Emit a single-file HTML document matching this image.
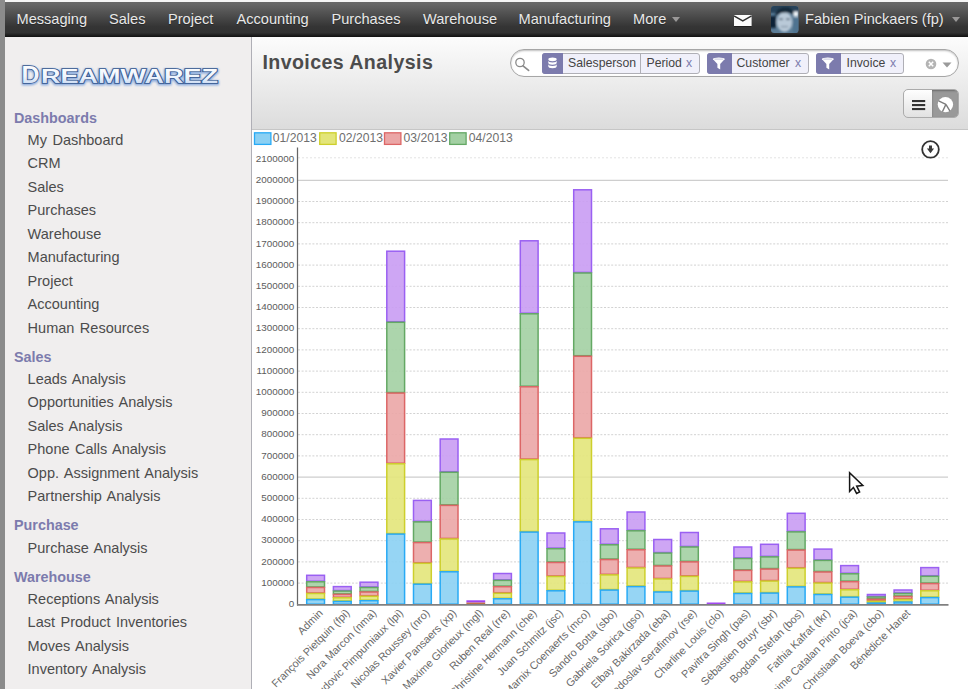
<!DOCTYPE html>
<html lang="en"><head><meta charset="utf-8"><title>Invoices Analysis - OpenERP</title>
<style>
html,body{margin:0;padding:0}
body{width:968px;height:689px;overflow:hidden;position:relative;background:#fff;font-family:"Liberation Sans",Arial,Helvetica,sans-serif;color:#4c4c4c}
.edge{position:absolute;left:0;top:0;width:5px;height:689px;background:#8b8b8b}
.topline{position:absolute;left:5px;top:0;width:963px;height:2px;background:#f4f4f4}
.nav{position:absolute;left:5px;top:2px;width:963px;height:35px;background:linear-gradient(#676767 0%,#656565 6%,#343434 71%,#323232 88%,#1b1b1b 96%,#111 100%);box-sizing:border-box}
.nv{position:absolute;top:8px;font-size:14.6px;line-height:18px;color:#e8e8e8;white-space:nowrap;margin-left:-5px;text-shadow:0 1px 1px rgba(0,0,0,.35)}
.caret{position:absolute;width:0;height:0;border-left:4.5px solid transparent;border-right:4.5px solid transparent;border-top:5px solid #9a9898}
.side{position:absolute;left:5px;top:37px;width:246px;height:652px;background:#f0eeee;border-right:1px solid #afafb6}
.sh{position:absolute;left:9px;margin-top:0.3px;font-size:14.35px;line-height:20px;font-weight:bold;color:#7c7bad;white-space:nowrap}
.si{position:absolute;left:22.6px;margin-top:-0.3px;font-size:14.5px;word-spacing:1.5px;line-height:20px;color:#4c4c4c;white-space:nowrap}
.head{position:absolute;left:252px;top:37px;width:716px;height:93.4px;background:linear-gradient(#fcfcfc 0%,#dcdcdc 100%);border-bottom:1px solid #c6c6c6;box-sizing:border-box}
.title{position:absolute;left:262.4px;top:50.2px;font-size:19.6px;letter-spacing:0.42px;line-height:24px;font-weight:bold;color:#4c4c4c;white-space:nowrap}
.search{position:absolute;left:510.3px;top:49.4px;width:449px;height:28px;box-sizing:border-box;border:1px solid #a6a6a6;border-radius:14px;background:#fff;box-shadow:inset 0 1px 2px rgba(0,0,0,.25)}
.facet{position:absolute;top:53px;height:21px;box-sizing:border-box;border:1px solid #afafb6;border-radius:3px;background:#f0f0fa;font-size:12.25px;line-height:19px;color:#444;white-space:nowrap}
.facet .ic{position:absolute;left:-1px;top:-1px;width:21px;height:21px;background:#7c7bad;border-radius:3px 0 0 3px}
.facet span{position:absolute;top:0}
.facet .x{color:#7c7bad;font-size:12.25px}
.facet .sep{position:absolute;top:0;width:1px;height:19px;background:#afafb6}
.vs{position:absolute;left:903.4px;top:89.4px;width:56px;height:28.4px;box-sizing:border-box;border:1px solid #ababab;border-radius:5px;background:linear-gradient(#fefefe,#e2e2e2);overflow:hidden}
.vs .on{position:absolute;left:28px;top:0;width:27px;height:27px;background:#999;box-shadow:inset 0 1px 2px rgba(0,0,0,.3)}
.chart{position:absolute;left:252px;top:129px}
</style></head><body>
<div class="edge"></div><div class="topline"></div>
<div class="nav">
<span class="nv" style="left:16.5px">Messaging</span>
<span class="nv" style="left:109px">Sales</span>
<span class="nv" style="left:168px">Project</span>
<span class="nv" style="left:236.5px">Accounting</span>
<span class="nv" style="left:331.5px">Purchases</span>
<span class="nv" style="left:423px">Warehouse</span>
<span class="nv" style="left:518.5px">Manufacturing</span>
<span class="nv" style="left:633px">More</span>
<span class="caret" style="left:667px;top:15px"></span>
<svg style="position:absolute;left:728.6px;top:12.6px" width="18" height="12" viewBox="0 0 18 12"><rect x="0" y="0" width="17.6" height="11.2" fill="#fbfbfb"/><rect x="0" y="11.2" width="17.6" height="0.8" fill="#111"/><path d="M0 0.9 L8.8 5.9 L17.6 0.9" fill="none" stroke="#2e2e2e" stroke-width="1.3"/></svg>
<svg style="position:absolute;left:765.6px;top:3.5px" width="28" height="28" viewBox="0 0 28 28"><defs><clipPath id="av"><rect x="0" y="0" width="27.4" height="27" rx="3"/></clipPath><filter id="avb" x="-10%" y="-10%" width="120%" height="120%"><feGaussianBlur stdDeviation="0.9"/></filter></defs><g clip-path="url(#av)"><rect width="28" height="28" fill="#5b7c96"/><g filter="url(#avb)"><rect x="-2" y="-2" width="32" height="9" fill="#27435a"/><rect x="-2" y="10" width="7" height="12" fill="#0f2238"/><rect x="22" y="12" width="8" height="16" fill="#4f7390"/><ellipse cx="13.5" cy="16" rx="7.8" ry="10" fill="#b9c9d8"/><path d="M4 11 Q5 1 14 1 Q23 1 23 10 Q19 5.5 13.5 6.5 Q8 6.5 4 11z" fill="#15293b"/><rect x="22.5" y="5.5" width="4.5" height="5" fill="#f4f8fb"/><rect x="8" y="12.6" width="4" height="1.3" fill="#3c5166"/><rect x="15" y="12.6" width="4" height="1.3" fill="#3c5166"/><rect x="10" y="20" width="7" height="1.2" fill="#7d8fa3"/></g></g></svg>
<span class="nv" style="left:805px">Fabien Pinckaers (fp)</span>
<span class="caret" style="left:947px;top:15px"></span>
</div>
<div class="side">
<svg style="position:absolute;left:10px;top:22px" width="216" height="34" viewBox="0 0 216 34" font-family="Liberation Sans, Arial, sans-serif">
<defs><linearGradient id="lg" x1="0" y1="0" x2="0" y2="1"><stop offset="0" stop-color="#ffffff"/><stop offset="0.55" stop-color="#eef4fc"/><stop offset="1" stop-color="#b9cfee"/></linearGradient>
<filter id="gl" x="-5%" y="-20%" width="110%" height="140%"><feGaussianBlur stdDeviation="1.1"/></filter></defs>
<g filter="url(#gl)" fill="#7fa3da" stroke="#7fa3da" stroke-width="2.6" opacity="0.95" font-weight="bold"><text x="6.5" y="25" font-size="23.6" textLength="18" lengthAdjust="spacingAndGlyphs">D</text><text x="26" y="25" font-size="19.4" textLength="177" lengthAdjust="spacingAndGlyphs">REAMWAREZ</text></g>
<g fill="url(#lg)" stroke="#34568e" stroke-width="1.5" paint-order="stroke" font-weight="bold"><text x="6.5" y="24.2" font-size="23.6" textLength="18" lengthAdjust="spacingAndGlyphs">D</text><text x="26" y="24.2" font-size="19.4" textLength="177" lengthAdjust="spacingAndGlyphs">REAMWAREZ</text></g>
</svg>
<div class="sh" style="top:71px">Dashboards</div>
<div class="si" style="top:93px">My Dashboard</div>
<div class="si" style="top:116px">CRM</div>
<div class="si" style="top:140px">Sales</div>
<div class="si" style="top:163px">Purchases</div>
<div class="si" style="top:187px">Warehouse</div>
<div class="si" style="top:210px">Manufacturing</div>
<div class="si" style="top:234px">Project</div>
<div class="si" style="top:257px">Accounting</div>
<div class="si" style="top:281px">Human Resources</div>
<div class="sh" style="top:310px">Sales</div>
<div class="si" style="top:332px">Leads Analysis</div>
<div class="si" style="top:355px">Opportunities Analysis</div>
<div class="si" style="top:379px">Sales Analysis</div>
<div class="si" style="top:402px">Phone Calls Analysis</div>
<div class="si" style="top:426px">Opp. Assignment Analysis</div>
<div class="si" style="top:449px">Partnership Analysis</div>
<div class="sh" style="top:478px">Purchase</div>
<div class="si" style="top:501px">Purchase Analysis</div>
<div class="sh" style="top:529.6px">Warehouse</div>
<div class="si" style="top:552px">Receptions Analysis</div>
<div class="si" style="top:575px">Last Product Inventories</div>
<div class="si" style="top:599px">Moves Analysis</div>
<div class="si" style="top:622px">Inventory Analysis</div>
</div>
<div class="head"></div>
<div class="title">Invoices Analysis</div>
<div class="search"></div>
<svg style="position:absolute;left:514px;top:56px" width="17" height="17" viewBox="0 0 17 17"><circle cx="6" cy="6.5" r="4.2" fill="none" stroke="#8a8a8a" stroke-width="1.3"/><path d="M9 9.8 L14.6 14.4" stroke="#8a8a8a" stroke-width="1.7" stroke-linecap="round"/></svg>
<div class="facet" style="left:542px;width:158px"><div class="ic"><svg width="21" height="21" viewBox="0 0 21 21"><g fill="#fff"><ellipse cx="10.5" cy="6.3" rx="4.2" ry="1.9"/><path d="M6.3 7.6 v2.2 a4.2 1.9 0 0 0 8.4 0 v-2.2 a4.2 1.9 0 0 1 -8.4 0z"/><path d="M6.3 11.1 v2.2 a4.2 1.9 0 0 0 8.4 0 v-2.2 a4.2 1.9 0 0 1 -8.4 0z"/></g></svg></div><span style="left:25px">Salesperson</span><div class="sep" style="left:97px"></div><span style="left:103.5px">Period</span><span class="x" style="left:143px">x</span></div>
<div class="facet" style="left:707px;width:102px"><div class="ic" style="width:24.5px"><svg width="24" height="21" viewBox="0 0 24 21"><path d="M5.8 6 h12 l-4.6 5 v5.4 l-2.8 -1.6 v-3.8z" fill="#fff"/><ellipse cx="11.8" cy="6" rx="6" ry="1.5" fill="#fff"/><path d="M7.4 6.1 h8.8" stroke="#b9b8d6" stroke-width="0.8"/></svg></div><span style="left:28.5px">Customer</span><span class="x" style="left:87px">x</span></div>
<div class="facet" style="left:816px;width:88px"><div class="ic" style="width:24.5px"><svg width="24" height="21" viewBox="0 0 24 21"><path d="M5.8 6 h12 l-4.6 5 v5.4 l-2.8 -1.6 v-3.8z" fill="#fff"/><ellipse cx="11.8" cy="6" rx="6" ry="1.5" fill="#fff"/><path d="M7.4 6.1 h8.8" stroke="#b9b8d6" stroke-width="0.8"/></svg></div><span style="left:29.5px">Invoice</span><span class="x" style="left:73px">x</span></div>
<svg style="position:absolute;left:924px;top:57px" width="30" height="14" viewBox="0 0 30 14"><circle cx="7" cy="7" r="5.3" fill="#b4b4b4"/><path d="M4.8 4.8 L9.2 9.2 M9.2 4.8 L4.8 9.2" stroke="#fff" stroke-width="1.5"/><path d="M18.5 5.5 h9 l-4.5 5z" fill="#9a9a9a"/></svg>
<div class="vs"><div class="on"></div>
<svg style="position:absolute;left:0;top:0" width="55" height="27" viewBox="0 0 55 27"><g fill="#333"><rect x="8" y="10" width="13.2" height="2.1"/><rect x="8" y="14" width="13.2" height="2.1"/><rect x="8" y="18" width="13.2" height="2.1"/></g><circle cx="41.4" cy="14.6" r="7.7" fill="#fff"/><path d="M41.9 14.4 L34.6 10.8 M41.9 14.4 L38.4 21.8 M41.9 14.4 L46 21.2" stroke="#7d7d7d" stroke-width="1.4" fill="none"/></svg></div>
<svg class="chart" width="716" height="560" viewBox="252 129 716 560" font-family="Liberation Sans, Arial, sans-serif">
<line x1="298" x2="948" y1="583.10" y2="583.10" stroke="#d2d2d2" stroke-width="1" stroke-dasharray="2 1.6"/>
<line x1="298" x2="948" y1="561.90" y2="561.90" stroke="#d2d2d2" stroke-width="1" stroke-dasharray="2 1.6"/>
<line x1="298" x2="948" y1="540.70" y2="540.70" stroke="#d2d2d2" stroke-width="1" stroke-dasharray="2 1.6"/>
<line x1="298" x2="948" y1="519.50" y2="519.50" stroke="#d2d2d2" stroke-width="1" stroke-dasharray="2 1.6"/>
<line x1="298" x2="948" y1="498.30" y2="498.30" stroke="#d2d2d2" stroke-width="1" stroke-dasharray="2 1.6"/>
<line x1="298" x2="948" y1="477.10" y2="477.10" stroke="#c2c2c2" stroke-width="1"/>
<line x1="298" x2="948" y1="455.90" y2="455.90" stroke="#d2d2d2" stroke-width="1" stroke-dasharray="2 1.6"/>
<line x1="298" x2="948" y1="434.70" y2="434.70" stroke="#d2d2d2" stroke-width="1" stroke-dasharray="2 1.6"/>
<line x1="298" x2="948" y1="413.50" y2="413.50" stroke="#d2d2d2" stroke-width="1" stroke-dasharray="2 1.6"/>
<line x1="298" x2="948" y1="392.30" y2="392.30" stroke="#d2d2d2" stroke-width="1" stroke-dasharray="2 1.6"/>
<line x1="298" x2="948" y1="371.10" y2="371.10" stroke="#d2d2d2" stroke-width="1" stroke-dasharray="2 1.6"/>
<line x1="298" x2="948" y1="349.90" y2="349.90" stroke="#d2d2d2" stroke-width="1" stroke-dasharray="2 1.6"/>
<line x1="298" x2="948" y1="328.70" y2="328.70" stroke="#d2d2d2" stroke-width="1" stroke-dasharray="2 1.6"/>
<line x1="298" x2="948" y1="307.50" y2="307.50" stroke="#d2d2d2" stroke-width="1" stroke-dasharray="2 1.6"/>
<line x1="298" x2="948" y1="286.30" y2="286.30" stroke="#d2d2d2" stroke-width="1" stroke-dasharray="2 1.6"/>
<line x1="298" x2="948" y1="265.10" y2="265.10" stroke="#d2d2d2" stroke-width="1" stroke-dasharray="2 1.6"/>
<line x1="298" x2="948" y1="243.90" y2="243.90" stroke="#d2d2d2" stroke-width="1" stroke-dasharray="2 1.6"/>
<line x1="298" x2="948" y1="222.70" y2="222.70" stroke="#d2d2d2" stroke-width="1" stroke-dasharray="2 1.6"/>
<line x1="298" x2="948" y1="201.50" y2="201.50" stroke="#d2d2d2" stroke-width="1" stroke-dasharray="2 1.6"/>
<line x1="298" x2="948" y1="180.30" y2="180.30" stroke="#c2c2c2" stroke-width="1"/>
<line x1="298" x2="948" y1="157.80" y2="157.80" stroke="#e3e3e3" stroke-width="1" stroke-dasharray="2 2"/>
<text x="294.3" y="606.90" text-anchor="end" font-size="9.9" fill="#5c5c5c">0</text>
<text x="294.3" y="585.70" text-anchor="end" font-size="9.9" fill="#5c5c5c">100000</text>
<text x="294.3" y="564.50" text-anchor="end" font-size="9.9" fill="#5c5c5c">200000</text>
<text x="294.3" y="543.30" text-anchor="end" font-size="9.9" fill="#5c5c5c">300000</text>
<text x="294.3" y="522.10" text-anchor="end" font-size="9.9" fill="#5c5c5c">400000</text>
<text x="294.3" y="500.90" text-anchor="end" font-size="9.9" fill="#5c5c5c">500000</text>
<text x="294.3" y="479.70" text-anchor="end" font-size="9.9" fill="#5c5c5c">600000</text>
<text x="294.3" y="458.50" text-anchor="end" font-size="9.9" fill="#5c5c5c">700000</text>
<text x="294.3" y="437.30" text-anchor="end" font-size="9.9" fill="#5c5c5c">800000</text>
<text x="294.3" y="416.10" text-anchor="end" font-size="9.9" fill="#5c5c5c">900000</text>
<text x="294.3" y="394.90" text-anchor="end" font-size="9.9" fill="#5c5c5c">1000000</text>
<text x="294.3" y="373.70" text-anchor="end" font-size="9.9" fill="#5c5c5c">1100000</text>
<text x="294.3" y="352.50" text-anchor="end" font-size="9.9" fill="#5c5c5c">1200000</text>
<text x="294.3" y="331.30" text-anchor="end" font-size="9.9" fill="#5c5c5c">1300000</text>
<text x="294.3" y="310.10" text-anchor="end" font-size="9.9" fill="#5c5c5c">1400000</text>
<text x="294.3" y="288.90" text-anchor="end" font-size="9.9" fill="#5c5c5c">1500000</text>
<text x="294.3" y="267.70" text-anchor="end" font-size="9.9" fill="#5c5c5c">1600000</text>
<text x="294.3" y="246.50" text-anchor="end" font-size="9.9" fill="#5c5c5c">1700000</text>
<text x="294.3" y="225.30" text-anchor="end" font-size="9.9" fill="#5c5c5c">1800000</text>
<text x="294.3" y="204.10" text-anchor="end" font-size="9.9" fill="#5c5c5c">1900000</text>
<text x="294.3" y="182.90" text-anchor="end" font-size="9.9" fill="#5c5c5c">2000000</text>
<text x="294.3" y="161.80" text-anchor="end" font-size="9.9" fill="#5c5c5c">2100000</text>
<rect x="306.70" y="575.30" width="17.80" height="5.90" fill="#c99cf3" fill-opacity="0.9" stroke="#9a60f2" stroke-width="1.5"/>
<rect x="306.70" y="581.80" width="17.80" height="5.10" fill="#a3d0a3" fill-opacity="0.9" stroke="#64a864" stroke-width="1.5"/>
<rect x="306.70" y="587.50" width="17.80" height="5.40" fill="#eba6a6" fill-opacity="0.9" stroke="#dc6666" stroke-width="1.5"/>
<rect x="306.70" y="593.50" width="17.80" height="5.50" fill="#e3e57a" fill-opacity="0.9" stroke="#cdcf2c" stroke-width="1.5"/>
<rect x="306.70" y="599.60" width="17.80" height="4.60" fill="#8bd0f3" fill-opacity="0.9" stroke="#28aaf5" stroke-width="1.5"/>
<rect x="333.40" y="586.60" width="17.80" height="3.90" fill="#c99cf3" fill-opacity="0.9" stroke="#9a60f2" stroke-width="1.5"/>
<rect x="333.40" y="591.10" width="17.80" height="2.70" fill="#a3d0a3" fill-opacity="0.9" stroke="#64a864" stroke-width="1.5"/>
<rect x="333.40" y="594.40" width="17.80" height="2.80" fill="#eba6a6" fill-opacity="0.9" stroke="#dc6666" stroke-width="1.5"/>
<rect x="333.40" y="597.80" width="17.80" height="3.10" fill="#e3e57a" fill-opacity="0.9" stroke="#cdcf2c" stroke-width="1.5"/>
<rect x="333.40" y="601.50" width="17.80" height="2.70" fill="#8bd0f3" fill-opacity="0.9" stroke="#28aaf5" stroke-width="1.5"/>
<rect x="360.10" y="582.20" width="17.80" height="4.70" fill="#c99cf3" fill-opacity="0.9" stroke="#9a60f2" stroke-width="1.5"/>
<rect x="360.10" y="587.50" width="17.80" height="3.90" fill="#a3d0a3" fill-opacity="0.9" stroke="#64a864" stroke-width="1.5"/>
<rect x="360.10" y="592.00" width="17.80" height="3.70" fill="#eba6a6" fill-opacity="0.9" stroke="#dc6666" stroke-width="1.5"/>
<rect x="360.10" y="596.30" width="17.80" height="3.80" fill="#e3e57a" fill-opacity="0.9" stroke="#cdcf2c" stroke-width="1.5"/>
<rect x="360.10" y="600.70" width="17.80" height="3.50" fill="#8bd0f3" fill-opacity="0.9" stroke="#28aaf5" stroke-width="1.5"/>
<rect x="386.80" y="251.20" width="17.80" height="70.50" fill="#c99cf3" fill-opacity="0.9" stroke="#9a60f2" stroke-width="1.5"/>
<rect x="386.80" y="322.30" width="17.80" height="70.20" fill="#a3d0a3" fill-opacity="0.9" stroke="#64a864" stroke-width="1.5"/>
<rect x="386.80" y="393.10" width="17.80" height="70.10" fill="#eba6a6" fill-opacity="0.9" stroke="#dc6666" stroke-width="1.5"/>
<rect x="386.80" y="463.80" width="17.80" height="69.70" fill="#e3e57a" fill-opacity="0.9" stroke="#cdcf2c" stroke-width="1.5"/>
<rect x="386.80" y="534.10" width="17.80" height="70.10" fill="#8bd0f3" fill-opacity="0.9" stroke="#28aaf5" stroke-width="1.5"/>
<rect x="413.50" y="500.40" width="17.80" height="20.90" fill="#c99cf3" fill-opacity="0.9" stroke="#9a60f2" stroke-width="1.5"/>
<rect x="413.50" y="521.90" width="17.80" height="20.10" fill="#a3d0a3" fill-opacity="0.9" stroke="#64a864" stroke-width="1.5"/>
<rect x="413.50" y="542.60" width="17.80" height="20.10" fill="#eba6a6" fill-opacity="0.9" stroke="#dc6666" stroke-width="1.5"/>
<rect x="413.50" y="563.30" width="17.80" height="20.30" fill="#e3e57a" fill-opacity="0.9" stroke="#cdcf2c" stroke-width="1.5"/>
<rect x="413.50" y="584.20" width="17.80" height="20.00" fill="#8bd0f3" fill-opacity="0.9" stroke="#28aaf5" stroke-width="1.5"/>
<rect x="440.20" y="439.00" width="17.80" height="32.70" fill="#c99cf3" fill-opacity="0.9" stroke="#9a60f2" stroke-width="1.5"/>
<rect x="440.20" y="472.30" width="17.80" height="32.50" fill="#a3d0a3" fill-opacity="0.9" stroke="#64a864" stroke-width="1.5"/>
<rect x="440.20" y="505.40" width="17.80" height="33.00" fill="#eba6a6" fill-opacity="0.9" stroke="#dc6666" stroke-width="1.5"/>
<rect x="440.20" y="539.00" width="17.80" height="32.20" fill="#e3e57a" fill-opacity="0.9" stroke="#cdcf2c" stroke-width="1.5"/>
<rect x="440.20" y="571.80" width="17.80" height="32.40" fill="#8bd0f3" fill-opacity="0.9" stroke="#28aaf5" stroke-width="1.5"/>
<rect x="466.40" y="600.3" width="18.80" height="2.3" fill="#a044f2"/>
<rect x="466.40" y="602.6" width="18.80" height="1.6" fill="#c27048"/>
<rect x="493.60" y="573.50" width="17.80" height="6.30" fill="#c99cf3" fill-opacity="0.9" stroke="#9a60f2" stroke-width="1.5"/>
<rect x="493.60" y="580.40" width="17.80" height="5.70" fill="#a3d0a3" fill-opacity="0.9" stroke="#64a864" stroke-width="1.5"/>
<rect x="493.60" y="586.70" width="17.80" height="6.00" fill="#eba6a6" fill-opacity="0.9" stroke="#dc6666" stroke-width="1.5"/>
<rect x="493.60" y="593.30" width="17.80" height="4.90" fill="#e3e57a" fill-opacity="0.9" stroke="#cdcf2c" stroke-width="1.5"/>
<rect x="493.60" y="598.80" width="17.80" height="5.40" fill="#8bd0f3" fill-opacity="0.9" stroke="#28aaf5" stroke-width="1.5"/>
<rect x="520.30" y="240.80" width="17.80" height="72.40" fill="#c99cf3" fill-opacity="0.9" stroke="#9a60f2" stroke-width="1.5"/>
<rect x="520.30" y="313.80" width="17.80" height="72.40" fill="#a3d0a3" fill-opacity="0.9" stroke="#64a864" stroke-width="1.5"/>
<rect x="520.30" y="386.80" width="17.80" height="72.20" fill="#eba6a6" fill-opacity="0.9" stroke="#dc6666" stroke-width="1.5"/>
<rect x="520.30" y="459.60" width="17.80" height="71.90" fill="#e3e57a" fill-opacity="0.9" stroke="#cdcf2c" stroke-width="1.5"/>
<rect x="520.30" y="532.10" width="17.80" height="72.10" fill="#8bd0f3" fill-opacity="0.9" stroke="#28aaf5" stroke-width="1.5"/>
<rect x="547.00" y="533.00" width="17.80" height="15.10" fill="#c99cf3" fill-opacity="0.9" stroke="#9a60f2" stroke-width="1.5"/>
<rect x="547.00" y="548.70" width="17.80" height="13.20" fill="#a3d0a3" fill-opacity="0.9" stroke="#64a864" stroke-width="1.5"/>
<rect x="547.00" y="562.50" width="17.80" height="13.40" fill="#eba6a6" fill-opacity="0.9" stroke="#dc6666" stroke-width="1.5"/>
<rect x="547.00" y="576.50" width="17.80" height="13.70" fill="#e3e57a" fill-opacity="0.9" stroke="#cdcf2c" stroke-width="1.5"/>
<rect x="547.00" y="590.80" width="17.80" height="13.40" fill="#8bd0f3" fill-opacity="0.9" stroke="#28aaf5" stroke-width="1.5"/>
<rect x="573.70" y="189.80" width="17.80" height="82.60" fill="#c99cf3" fill-opacity="0.9" stroke="#9a60f2" stroke-width="1.5"/>
<rect x="573.70" y="273.00" width="17.80" height="82.70" fill="#a3d0a3" fill-opacity="0.9" stroke="#64a864" stroke-width="1.5"/>
<rect x="573.70" y="356.30" width="17.80" height="81.40" fill="#eba6a6" fill-opacity="0.9" stroke="#dc6666" stroke-width="1.5"/>
<rect x="573.70" y="438.30" width="17.80" height="83.00" fill="#e3e57a" fill-opacity="0.9" stroke="#cdcf2c" stroke-width="1.5"/>
<rect x="573.70" y="521.90" width="17.80" height="82.30" fill="#8bd0f3" fill-opacity="0.9" stroke="#28aaf5" stroke-width="1.5"/>
<rect x="600.40" y="528.80" width="17.80" height="15.40" fill="#c99cf3" fill-opacity="0.9" stroke="#9a60f2" stroke-width="1.5"/>
<rect x="600.40" y="544.80" width="17.80" height="14.20" fill="#a3d0a3" fill-opacity="0.9" stroke="#64a864" stroke-width="1.5"/>
<rect x="600.40" y="559.60" width="17.80" height="14.70" fill="#eba6a6" fill-opacity="0.9" stroke="#dc6666" stroke-width="1.5"/>
<rect x="600.40" y="574.90" width="17.80" height="14.60" fill="#e3e57a" fill-opacity="0.9" stroke="#cdcf2c" stroke-width="1.5"/>
<rect x="600.40" y="590.10" width="17.80" height="14.10" fill="#8bd0f3" fill-opacity="0.9" stroke="#28aaf5" stroke-width="1.5"/>
<rect x="627.10" y="512.00" width="17.80" height="18.20" fill="#c99cf3" fill-opacity="0.9" stroke="#9a60f2" stroke-width="1.5"/>
<rect x="627.10" y="530.80" width="17.80" height="18.40" fill="#a3d0a3" fill-opacity="0.9" stroke="#64a864" stroke-width="1.5"/>
<rect x="627.10" y="549.80" width="17.80" height="17.60" fill="#eba6a6" fill-opacity="0.9" stroke="#dc6666" stroke-width="1.5"/>
<rect x="627.10" y="568.00" width="17.80" height="18.00" fill="#e3e57a" fill-opacity="0.9" stroke="#cdcf2c" stroke-width="1.5"/>
<rect x="627.10" y="586.60" width="17.80" height="17.60" fill="#8bd0f3" fill-opacity="0.9" stroke="#28aaf5" stroke-width="1.5"/>
<rect x="653.80" y="539.50" width="17.80" height="13.00" fill="#c99cf3" fill-opacity="0.9" stroke="#9a60f2" stroke-width="1.5"/>
<rect x="653.80" y="553.10" width="17.80" height="12.30" fill="#a3d0a3" fill-opacity="0.9" stroke="#64a864" stroke-width="1.5"/>
<rect x="653.80" y="566.00" width="17.80" height="12.40" fill="#eba6a6" fill-opacity="0.9" stroke="#dc6666" stroke-width="1.5"/>
<rect x="653.80" y="579.00" width="17.80" height="12.40" fill="#e3e57a" fill-opacity="0.9" stroke="#cdcf2c" stroke-width="1.5"/>
<rect x="653.80" y="592.00" width="17.80" height="12.20" fill="#8bd0f3" fill-opacity="0.9" stroke="#28aaf5" stroke-width="1.5"/>
<rect x="680.50" y="532.50" width="17.80" height="13.90" fill="#c99cf3" fill-opacity="0.9" stroke="#9a60f2" stroke-width="1.5"/>
<rect x="680.50" y="547.00" width="17.80" height="14.30" fill="#a3d0a3" fill-opacity="0.9" stroke="#64a864" stroke-width="1.5"/>
<rect x="680.50" y="561.90" width="17.80" height="13.90" fill="#eba6a6" fill-opacity="0.9" stroke="#dc6666" stroke-width="1.5"/>
<rect x="680.50" y="576.40" width="17.80" height="14.10" fill="#e3e57a" fill-opacity="0.9" stroke="#cdcf2c" stroke-width="1.5"/>
<rect x="680.50" y="591.10" width="17.80" height="13.10" fill="#8bd0f3" fill-opacity="0.9" stroke="#28aaf5" stroke-width="1.5"/>
<rect x="706.70" y="602.5" width="18.80" height="1.7" fill="#a24af2"/>
<rect x="733.90" y="547.00" width="17.80" height="10.90" fill="#c99cf3" fill-opacity="0.9" stroke="#9a60f2" stroke-width="1.5"/>
<rect x="733.90" y="558.50" width="17.80" height="11.30" fill="#a3d0a3" fill-opacity="0.9" stroke="#64a864" stroke-width="1.5"/>
<rect x="733.90" y="570.40" width="17.80" height="10.90" fill="#eba6a6" fill-opacity="0.9" stroke="#dc6666" stroke-width="1.5"/>
<rect x="733.90" y="581.90" width="17.80" height="11.00" fill="#e3e57a" fill-opacity="0.9" stroke="#cdcf2c" stroke-width="1.5"/>
<rect x="733.90" y="593.50" width="17.80" height="10.70" fill="#8bd0f3" fill-opacity="0.9" stroke="#28aaf5" stroke-width="1.5"/>
<rect x="760.60" y="544.30" width="17.80" height="12.00" fill="#c99cf3" fill-opacity="0.9" stroke="#9a60f2" stroke-width="1.5"/>
<rect x="760.60" y="556.90" width="17.80" height="11.60" fill="#a3d0a3" fill-opacity="0.9" stroke="#64a864" stroke-width="1.5"/>
<rect x="760.60" y="569.10" width="17.80" height="11.40" fill="#eba6a6" fill-opacity="0.9" stroke="#dc6666" stroke-width="1.5"/>
<rect x="760.60" y="581.10" width="17.80" height="11.40" fill="#e3e57a" fill-opacity="0.9" stroke="#cdcf2c" stroke-width="1.5"/>
<rect x="760.60" y="593.10" width="17.80" height="11.10" fill="#8bd0f3" fill-opacity="0.9" stroke="#28aaf5" stroke-width="1.5"/>
<rect x="787.30" y="513.30" width="17.80" height="18.00" fill="#c99cf3" fill-opacity="0.9" stroke="#9a60f2" stroke-width="1.5"/>
<rect x="787.30" y="531.90" width="17.80" height="17.60" fill="#a3d0a3" fill-opacity="0.9" stroke="#64a864" stroke-width="1.5"/>
<rect x="787.30" y="550.10" width="17.80" height="17.60" fill="#eba6a6" fill-opacity="0.9" stroke="#dc6666" stroke-width="1.5"/>
<rect x="787.30" y="568.30" width="17.80" height="18.00" fill="#e3e57a" fill-opacity="0.9" stroke="#cdcf2c" stroke-width="1.5"/>
<rect x="787.30" y="586.90" width="17.80" height="17.30" fill="#8bd0f3" fill-opacity="0.9" stroke="#28aaf5" stroke-width="1.5"/>
<rect x="814.00" y="549.10" width="17.80" height="10.70" fill="#c99cf3" fill-opacity="0.9" stroke="#9a60f2" stroke-width="1.5"/>
<rect x="814.00" y="560.40" width="17.80" height="11.00" fill="#a3d0a3" fill-opacity="0.9" stroke="#64a864" stroke-width="1.5"/>
<rect x="814.00" y="572.00" width="17.80" height="10.50" fill="#eba6a6" fill-opacity="0.9" stroke="#dc6666" stroke-width="1.5"/>
<rect x="814.00" y="583.10" width="17.80" height="10.80" fill="#e3e57a" fill-opacity="0.9" stroke="#cdcf2c" stroke-width="1.5"/>
<rect x="814.00" y="594.50" width="17.80" height="9.70" fill="#8bd0f3" fill-opacity="0.9" stroke="#28aaf5" stroke-width="1.5"/>
<rect x="840.70" y="565.60" width="17.80" height="7.60" fill="#c99cf3" fill-opacity="0.9" stroke="#9a60f2" stroke-width="1.5"/>
<rect x="840.70" y="573.80" width="17.80" height="7.30" fill="#a3d0a3" fill-opacity="0.9" stroke="#64a864" stroke-width="1.5"/>
<rect x="840.70" y="581.70" width="17.80" height="7.50" fill="#eba6a6" fill-opacity="0.9" stroke="#dc6666" stroke-width="1.5"/>
<rect x="840.70" y="589.80" width="17.80" height="6.80" fill="#e3e57a" fill-opacity="0.9" stroke="#cdcf2c" stroke-width="1.5"/>
<rect x="840.70" y="597.20" width="17.80" height="7.00" fill="#8bd0f3" fill-opacity="0.9" stroke="#28aaf5" stroke-width="1.5"/>
<rect x="867.40" y="594.50" width="17.80" height="1.90" fill="#c99cf3" fill-opacity="0.9" stroke="#9a60f2" stroke-width="1.5"/>
<rect x="867.40" y="597.00" width="17.80" height="1.70" fill="#a3d0a3" fill-opacity="0.9" stroke="#64a864" stroke-width="1.5"/>
<rect x="867.40" y="599.30" width="17.80" height="1.40" fill="#eba6a6" fill-opacity="0.9" stroke="#dc6666" stroke-width="1.5"/>
<rect x="867.40" y="601.30" width="17.80" height="1.20" fill="#e3e57a" fill-opacity="0.9" stroke="#cdcf2c" stroke-width="1.5"/>
<rect x="867.40" y="603.10" width="17.80" height="1.10" fill="#8bd0f3" fill-opacity="0.9" stroke="#28aaf5" stroke-width="1.5"/>
<rect x="894.10" y="590.00" width="17.80" height="2.90" fill="#c99cf3" fill-opacity="0.9" stroke="#9a60f2" stroke-width="1.5"/>
<rect x="894.10" y="593.50" width="17.80" height="2.40" fill="#a3d0a3" fill-opacity="0.9" stroke="#64a864" stroke-width="1.5"/>
<rect x="894.10" y="596.50" width="17.80" height="2.40" fill="#eba6a6" fill-opacity="0.9" stroke="#dc6666" stroke-width="1.5"/>
<rect x="894.10" y="599.50" width="17.80" height="2.00" fill="#e3e57a" fill-opacity="0.9" stroke="#cdcf2c" stroke-width="1.5"/>
<rect x="894.10" y="602.10" width="17.80" height="2.10" fill="#8bd0f3" fill-opacity="0.9" stroke="#28aaf5" stroke-width="1.5"/>
<rect x="920.80" y="567.60" width="17.80" height="8.10" fill="#c99cf3" fill-opacity="0.9" stroke="#9a60f2" stroke-width="1.5"/>
<rect x="920.80" y="576.30" width="17.80" height="6.70" fill="#a3d0a3" fill-opacity="0.9" stroke="#64a864" stroke-width="1.5"/>
<rect x="920.80" y="583.60" width="17.80" height="6.60" fill="#eba6a6" fill-opacity="0.9" stroke="#dc6666" stroke-width="1.5"/>
<rect x="920.80" y="590.80" width="17.80" height="6.20" fill="#e3e57a" fill-opacity="0.9" stroke="#cdcf2c" stroke-width="1.5"/>
<rect x="920.80" y="597.60" width="17.80" height="6.60" fill="#8bd0f3" fill-opacity="0.9" stroke="#28aaf5" stroke-width="1.5"/>
<line x1="297.5" x2="297.5" y1="147.5" y2="605.5" stroke="#666" stroke-width="1.25"/>
<line x1="297" x2="948.5" y1="604.9499999999999" y2="604.9499999999999" stroke="#808080" stroke-width="1.8"/>
<text transform="translate(323.60,613.80) rotate(-45)" text-anchor="end" font-size="10.8" fill="#686868">Admin</text>
<text transform="translate(350.30,613.80) rotate(-45)" text-anchor="end" font-size="10.8" fill="#686868">François Pietquin (fpi)</text>
<text transform="translate(377.00,613.80) rotate(-45)" text-anchor="end" font-size="10.8" fill="#686868">Nora Marcon (nma)</text>
<text transform="translate(403.70,613.80) rotate(-45)" text-anchor="end" font-size="10.8" fill="#686868">Ludovic Pimpurniaux (lpi)</text>
<text transform="translate(430.40,613.80) rotate(-45)" text-anchor="end" font-size="10.8" fill="#686868">Nicolas Roussey (nro)</text>
<text transform="translate(457.10,613.80) rotate(-45)" text-anchor="end" font-size="10.8" fill="#686868">Xavier Pansaers (xp)</text>
<text transform="translate(483.80,613.80) rotate(-45)" text-anchor="end" font-size="10.8" fill="#686868">Maxime Glorieux (mgl)</text>
<text transform="translate(510.50,613.80) rotate(-45)" text-anchor="end" font-size="10.8" fill="#686868">Ruben Real (rre)</text>
<text transform="translate(537.20,613.80) rotate(-45)" text-anchor="end" font-size="10.8" fill="#686868">Christine Hermann (che)</text>
<text transform="translate(563.90,613.80) rotate(-45)" text-anchor="end" font-size="10.8" fill="#686868">Juan Schmitz (jsc)</text>
<text transform="translate(590.60,613.80) rotate(-45)" text-anchor="end" font-size="10.8" fill="#686868">Marnix Coenaerts (mco)</text>
<text transform="translate(617.30,613.80) rotate(-45)" text-anchor="end" font-size="10.8" fill="#686868">Sandro Botta (sbo)</text>
<text transform="translate(644.00,613.80) rotate(-45)" text-anchor="end" font-size="10.8" fill="#686868">Gabriela Soirica (gso)</text>
<text transform="translate(670.70,613.80) rotate(-45)" text-anchor="end" font-size="10.8" fill="#686868">Elbay Bakirzada (eba)</text>
<text transform="translate(697.40,613.80) rotate(-45)" text-anchor="end" font-size="10.8" fill="#686868">Radoslav Serafimov (rse)</text>
<text transform="translate(724.10,613.80) rotate(-45)" text-anchor="end" font-size="10.8" fill="#686868">Charline Louis (clo)</text>
<text transform="translate(750.80,613.80) rotate(-45)" text-anchor="end" font-size="10.8" fill="#686868">Pavitra Singh (pas)</text>
<text transform="translate(777.50,613.80) rotate(-45)" text-anchor="end" font-size="10.8" fill="#686868">Sébastien Bruyr (sbr)</text>
<text transform="translate(804.20,613.80) rotate(-45)" text-anchor="end" font-size="10.8" fill="#686868">Bogdan Stefan (bos)</text>
<text transform="translate(830.90,613.80) rotate(-45)" text-anchor="end" font-size="10.8" fill="#686868">Fathia Kafrat (fkr)</text>
<text transform="translate(857.60,613.80) rotate(-45)" text-anchor="end" font-size="10.8" fill="#686868">Jaime Catalan Pinto (jca)</text>
<text transform="translate(884.30,613.80) rotate(-45)" text-anchor="end" font-size="10.8" fill="#686868">Christiaan Boeva (cbo)</text>
<text transform="translate(911.00,613.80) rotate(-45)" text-anchor="end" font-size="10.8" fill="#686868">Bénédicte Hanet</text>
<rect x="254.5" y="132.8" width="16.4" height="11.6" fill="#8bd0f3" stroke="#28aaf5" stroke-width="1.3"/>
<text x="272.8" y="141.9" font-size="12.15" fill="#6e6e6e">01/2013</text>
<rect x="319.7" y="132.8" width="16.4" height="11.6" fill="#e3e57a" stroke="#cdcf2c" stroke-width="1.3"/>
<text x="339.0" y="141.9" font-size="12.15" fill="#6e6e6e">02/2013</text>
<rect x="384.5" y="132.8" width="16.4" height="11.6" fill="#eba6a6" stroke="#dc6666" stroke-width="1.3"/>
<text x="403.5" y="141.9" font-size="12.15" fill="#6e6e6e">03/2013</text>
<rect x="449.7" y="132.8" width="16.4" height="11.6" fill="#a3d0a3" stroke="#64a864" stroke-width="1.3"/>
<text x="468.8" y="141.9" font-size="12.15" fill="#6e6e6e">04/2013</text>
<g transform="translate(930.5,149.4)"><circle r="8.3" fill="#fff" stroke="#333" stroke-width="1.8"/><path d="M-1.5 -4 h3 v3.2 h2.1 l-3.6 4.6 l-3.6 -4.6 h2.1z" fill="#3a3a3a"/></g>
</svg>
<svg style="position:absolute;left:848px;top:470px" width="18" height="26" viewBox="0 0 18 26"><path d="M1.6 2.7 L1.6 21.4 L5.4 17.5 L8.6 23.4 L11.6 22 L8.7 16.2 L14.8 15.5z" fill="#fff" stroke="#151515" stroke-width="1.5" stroke-linejoin="miter"/></svg>
</body></html>
